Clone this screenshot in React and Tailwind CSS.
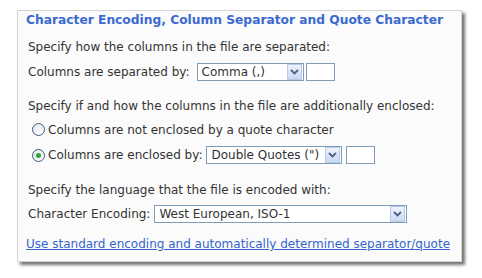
import React from "react";

function Arrow() {
  return (
    <span className="flex h-[16px] w-[15px] items-center justify-center border border-[#b8c9e6] bg-gradient-to-b from-[#eef3fc] to-[#c9d8f2]">
      <svg width="9" height="6" viewBox="0 0 9 6">
        <path d="M1 1 L4.5 4.5 L8 1" fill="none" stroke="#4d6185" strokeWidth="1.8" />
      </svg>
    </span>
  );
}

function Select({ value, width }) {
  return (
    <div className={`flex h-[18px] items-center justify-between border border-[#7f9db9] bg-white pl-[4px] pr-[1px] ${width}`}>
      <span className="leading-none">{value}</span>
      <Arrow />
    </div>
  );
}

function SmallInput() {
  return <div className="h-[18px] w-[29px] border border-[#7f9db9] bg-white" />;
}

function Radio({ checked }) {
  return (
    <span className="flex h-[13px] w-[13px] items-center justify-center rounded-full border border-[#3d5a82] bg-gradient-to-br from-[#e3e6ea] to-white">
      {checked && <span className="h-[5px] w-[5px] rounded-full bg-[#2fa73a]" />}
    </span>
  );
}

export default function App() {
  return (
    <div className="h-[278px] w-[482px] bg-white pl-[17px] pt-[10px] font-['DejaVu_Sans',sans-serif] text-[12px] text-[#333333]">
      <div className="flex h-[252px] w-[445px] flex-col border border-[#d4d4d4] bg-[#fbfbfb] px-[8px] shadow-[3px_3px_3px_rgba(0,0,0,0.55)]">
        <div className="flex h-[18px] items-end text-[12.25px] font-bold text-[#3a6ad0]">
          Character Encoding, Column Separator and Quote Character
        </div>
        <div className="flex h-[28px] items-end pl-[2px] pb-[1px]">Specify how the columns in the file are separated:</div>
        <div className="flex h-[29px] items-center pl-[2px] pt-[1px]">
          <span>Columns are separated by:</span>
          <span className="ml-[7px] flex gap-[2px]">
            <Select value="Comma (,)" width="w-[107px]" />
            <SmallInput />
          </span>
        </div>
        <div className="flex h-[31px] items-end pl-[2px] pb-[2px]">Specify if and how the columns in the file are additionally enclosed:</div>
        <div className="flex h-[25px] items-center gap-[3px] pl-[6px]">
          <Radio />
          <span>Columns are not enclosed by a quote character</span>
        </div>
        <div className="flex h-[26px] items-center gap-[3px] pl-[6px]">
          <Radio checked />
          <span>Columns are enclosed by:</span>
          <span className="ml-[1px] flex gap-[4px]">
            <Select value={'Double Quotes (")'} width="w-[136px]" />
            <SmallInput />
          </span>
        </div>
        <div className="flex h-[33px] items-end pl-[2px] pb-[2px]">Specify the language that the file is encoded with:</div>
        <div className="flex h-[26px] items-center gap-[4px] pl-[2px]">
          <span>Character Encoding:</span>
          <Select value="West European, ISO-1" width="w-[253px]" />
        </div>
        <div className="flex h-[27px] items-end pb-[1px]">
          <a href="#" className="text-[#3366cc] underline">Use standard encoding and automatically determined separator/quote</a>
        </div>
      </div>
    </div>
  );
}
